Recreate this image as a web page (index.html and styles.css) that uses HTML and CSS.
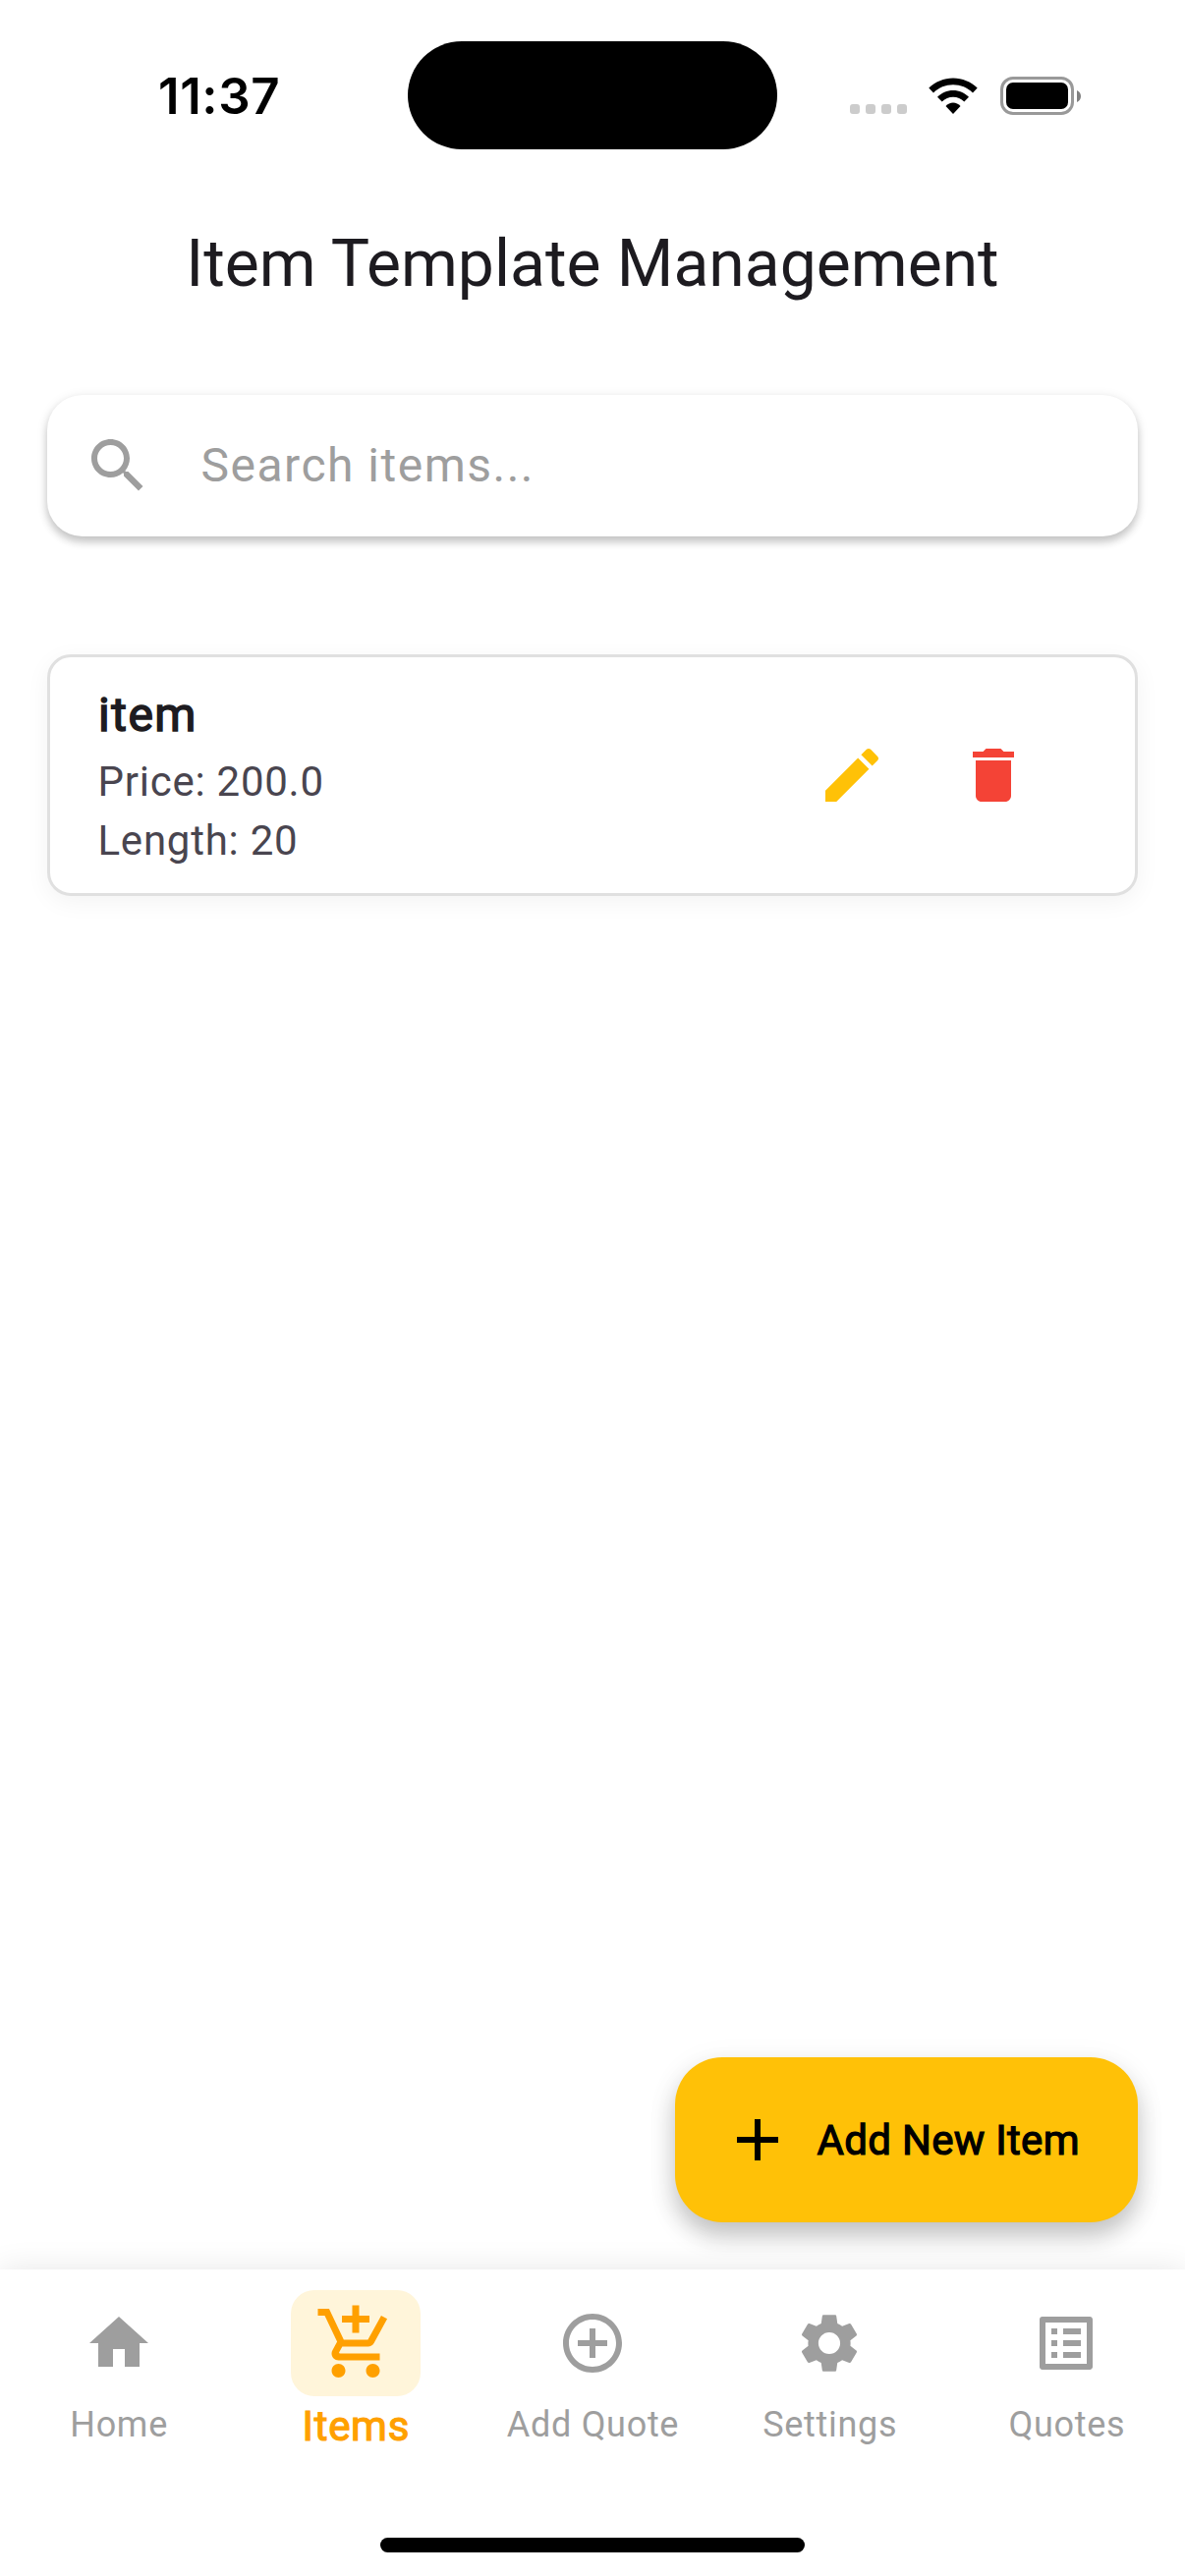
FILE: index.html
```html
<!DOCTYPE html>
<html lang="en">
<head>
<meta charset="utf-8">
<title>Item Template Management</title>
<link rel="stylesheet" href="styles.css">
</head>
<body>
<div class="screen">
  <header class="status-bar">
    <div class="status-time">11:37</div>
    <div class="island"></div>
    <div class="status-icons">
      <div class="cellular"><i></i><i></i><i></i><i></i></div>
      <svg class="wifi" viewBox="0 0 50 37">
        <path d="M0.3 10.6C7 4 15.5.4 25 .4S43 4 49.7 10.6L45 15.4C39.600 10.200 32.600 7.300 25 7.300S10.400 10.200 5 15.400Z"/>
        <path d="M9 19.700C13.300 15.500 18.800 12.900 25 12.900S36.700 15.500 41 19.700L36.300 24.500C33.200 21.500 29.300 19.700 25 19.700S16.800 21.500 13.700 24.500Z"/>
        <path d="M17.500 28.900C19.500 26.800 22.100 25.500 25 25.500S30.500 26.800 32.500 28.900L25 37Z"/>
      </svg>
      <div class="battery"><div class="battery-body"><div class="battery-level"></div></div><svg class="battery-tip" viewBox="0 0 4 12"><path d="M0 0C2.400 1 4 3.300 4 6S2.400 11 0 12Z"/></svg></div>
    </div>
  </header>

  <h1 class="app-title">Item Template Management</h1>

  <main class="content">
    <div class="search">
      <svg class="icon" viewBox="0 0 24 24"><path d="M15.500 14h-.79l-.28-.27C15.410 12.590 16 11.110 16 9.500 16 5.910 13.090 3 9.500 3S3 5.910 3 9.500 5.910 16 9.500 16c1.610 0 3.090-.59 4.230-1.570l.27.28v.79l5 4.990L20.490 19l-4.990-5zm-6 0C7.010 14 5 11.990 5 9.500S7.010 5 9.500 5 14 7.010 14 9.500 11.990 14 9.500 14z"/></svg>
      <span class="search-hint">Search items...</span>
    </div>

    <article class="item-card">
      <div class="item-text">
        <h2 class="item-name">item</h2>
        <p class="item-detail">Price: 200.0</p>
        <p class="item-detail">Length: 20</p>
      </div>
      <div class="item-actions">
        <svg class="icon edit" viewBox="0 0 24 24"><path d="M3 17.250V21h3.750L17.810 9.940l-3.750-3.750L3 17.250zM20.710 7.040c.39-.39.39-1.020 0-1.410l-2.340-2.340c-.39-.39-1.020-.39-1.410 0l-1.830 1.830 3.750 3.750 1.830-1.830z"/></svg>
        <svg class="icon delete" viewBox="0 0 24 24"><path d="M6 19c0 1.100.9 2 2 2h8c1.100 0 2-.9 2-2V7H6v12zM19 4h-3.500l-1-1h-5l-1 1H5v2h14V4z"/></svg>
      </div>
    </article>

    <div class="fab">
      <svg class="icon" viewBox="0 0 24 24"><path d="M19 13h-6v6h-2v-6H5v-2h6V5h2v6h6v2z"/></svg>
      <span class="fab-label">Add New Item</span>
    </div>
  </main>

  <nav class="nav">
    <div class="nav-items">
      <div class="nav-item">
        <div class="nav-icon"><svg class="icon" viewBox="0 0 24 24"><path d="M10 20v-6h4v6h5v-8h3L12 3 2 12h3v8z"/></svg></div>
        <span class="nav-label">Home</span>
      </div>
      <div class="nav-item active">
        <div class="nav-icon"><svg class="icon" viewBox="0 0 24 24"><path d="M11 9h2V6h3V4h-3V1h-2v3H8v2h3v3zm-4 9c-1.100 0-1.990.9-1.990 2S5.900 22 7 22s2-.9 2-2-.9-2-2-2zm10 0c-1.100 0-1.990.9-1.990 2s.89 2 1.990 2 2-.9 2-2-.9-2-2-2zm-9.830-3.250l.03-.12.9-1.630h7.450c.75 0 1.410-.41 1.750-1.030l3.860-7.010L19.420 4h-.01l-1.100 2-2.760 5H8.530l-.13-.27L6.160 6l-.95-2-.94-2H1v2h2l3.600 7.590-1.350 2.450c-.16.28-.25.61-.25.960 0 1.100.9 2 2 2h12v-2H7.420c-.13 0-.25-.11-.25-.25z"/></svg></div>
        <span class="nav-label">Items</span>
      </div>
      <div class="nav-item">
        <div class="nav-icon"><svg class="icon" viewBox="0 0 24 24"><path d="M13 7h-2v4H7v2h4v4h2v-4h4v-2h-4V7zm-1-5C6.480 2 2 6.480 2 12s4.480 10 10 10 10-4.480 10-10S17.520 2 12 2zm0 18c-4.410 0-8-3.590-8-8s3.590-8 8-8 8 3.590 8 8-3.590 8-8 8z"/></svg></div>
        <span class="nav-label">Add Quote</span>
      </div>
      <div class="nav-item">
        <div class="nav-icon"><svg class="icon" viewBox="0 0 24 24"><path d="M19.140 12.940c.04-.3.06-.61.06-.94 0-.32-.02-.64-.07-.94l2.030-1.580c.18-.14.23-.41.12-.61l-1.920-3.320c-.12-.22-.37-.29-.59-.22l-2.390.96c-.5-.38-1.030-.7-1.620-.94l-.36-2.540c-.04-.24-.24-.41-.48-.41h-3.840c-.24 0-.43.17-.47.41l-.36 2.540c-.59.24-1.130.57-1.620.94l-2.390-.96c-.22-.08-.47 0-.59.22L2.740 8.870c-.12.21-.08.47.12.61l2.030 1.580c-.05.3-.09.63-.09.94s.02.64.07.94l-2.030 1.580c-.18.14-.23.41-.12.61l1.920 3.320c.12.22.37.29.59.22l2.390-.96c.5.38 1.030.7 1.620.94l.36 2.540c.05.24.24.41.48.41h3.840c.24 0 .44-.17.47-.41l.36-2.540c.59-.24 1.130-.56 1.620-.94l2.390.96c.22.08.47 0 .59-.22l1.920-3.320c.12-.22.07-.47-.12-.61l-2.010-1.580zM12 15.700c-2.040 0-3.700-1.660-3.700-3.700s1.660-3.700 3.700-3.700 3.700 1.660 3.700 3.700-1.660 3.700-3.700 3.700z"/></svg></div>
        <span class="nav-label">Settings</span>
      </div>
      <div class="nav-item">
        <div class="nav-icon"><svg class="icon" viewBox="0 0 24 24"><path d="M19 5v14H5V5h14m1.100-2H3.900c-.5 0-.9.4-.9.900v16.200c0 .4.4.9.9.9h16.200c.4 0 .9-.5.9-.9V3.900c0-.5-.5-.9-.9-.9zM11 7h6v2h-6V7zm0 4h6v2h-6v-2zm0 4h6v2h-6v-2zM7 7h2v2H7V7zm0 4h2v2H7v-2zm0 4h2v2H7v-2z"/></svg></div>
        <span class="nav-label">Quotes</span>
      </div>
    </div>
    <div class="home-indicator"></div>
  </nav>
</div>
</body>
</html>
```
FILE: styles.css
```css
* { box-sizing: border-box; margin: 0; padding: 0; }
body { background: #fff; font-family: Roboto, sans-serif; color: #1d1b20; }

.screen { width: 1206px; height: 2622px; display: flex; flex-direction: column; overflow: hidden; background: #fff; }
.icon { display: block; width: 72px; height: 72px; fill: currentColor; flex: none; }

.status-bar { height: 186px; flex: none; display: grid; grid-template-columns: 415px 376px 415px; align-items: start; }
.status-time { padding: 68px 0 0 161px; font: 600 51px/60px Inter, sans-serif; letter-spacing: 0.6px; color: #000; }
.island { height: 110px; margin-top: 42px; border-radius: 55px; background: #000; }
.status-icons { display: flex; align-items: flex-start; padding: 78px 0 0 74px; }
.cellular { display: flex; gap: 6px; padding-top: 28px; }
.cellular i { width: 10px; height: 10px; border-radius: 3px; background: #ccc; }
.wifi { width: 50px; height: 37px; margin: 1px 0 0 22px; fill: #000; }
.battery { display: flex; align-items: center; gap: 3px; margin-left: 23px; }
.battery-body { width: 75px; height: 39px; padding: 3px; border: 3px solid #999; border-radius: 13px; }
.battery-level { height: 100%; border-radius: 7px; background: #000; }
.battery-tip { width: 4px; height: 12px; fill: #808080; }

.app-title { height: 168px; flex: none; text-align: center; font-size: 66px; line-height: 166px; font-weight: 400; }

.content { flex: 1; display: flex; flex-direction: column; padding: 48px; }
.search { height: 144px; flex: none; display: flex; align-items: center; gap: 48.5px; padding-left: 36px; border-radius: 36px; background: #fff; color: #9e9e9e; box-shadow: 0 6px 9px rgba(0,0,0,.18), 0 2px 12px rgba(0,0,0,.1); }
.search-hint { padding-bottom: 1px; font-size: 48px; line-height: 71px; letter-spacing: 1.5px; }

.item-card { height: 246px; flex: none; display: flex; justify-content: space-between; align-items: center; margin-top: 120px; padding: 0 108px 0 48.5px; border: 3px solid #e0e0e0; border-radius: 24px; background: #fff; box-shadow: 0 6px 24px rgba(0,0,0,.05); }
.item-name { padding: 0 0 2px 0.5px; font-size: 48px; line-height: 72px; font-weight: 400; letter-spacing: 1.5px; -webkit-text-stroke: 1.5px currentColor; }
.item-detail { font-size: 42px; line-height: 60px; letter-spacing: 0.75px; color: #49454f; }
.item-actions { display: flex; gap: 72px; }
.edit { color: #ffc107; }
.delete { color: #f44336; }

.fab { width: 471px; height: 168px; display: flex; align-items: center; gap: 24px; align-self: flex-end; margin-top: auto; padding-left: 48px; border-radius: 48px; background: #ffc107; color: #000; box-shadow: 0 14px 24px rgba(0,0,0,.22), 0 6px 36px rgba(0,0,0,.05); }
.fab-label { padding: 2px 0 0 0.5px; font-size: 42px; font-weight: 400; line-height: 60px; letter-spacing: 0.3px; white-space: nowrap; -webkit-text-stroke: 1.2px currentColor; }

.nav { position: relative; height: 312px; flex: none; display: flex; flex-direction: column; justify-content: space-between; padding: 21px 0 24px; background: #fff; box-shadow: 0 0 30px rgba(0,0,0,.1); }
.nav-items { display: grid; grid-template-columns: repeat(5, 1fr); }
.nav-item { display: flex; flex-direction: column; align-items: center; color: #9e9e9e; }
.nav-icon { height: 108px; display: flex; align-items: center; }
.nav-label { padding-left: 1px; font-size: 36px; line-height: 58px; letter-spacing: 0.7px; white-space: nowrap; }
.active { color: #ffa000; }
.active .nav-icon { padding: 0 24px; border-radius: 24px; background: #fff5da; }
.active .icon { width: 84px; height: 84px; }
.active .nav-label { font-size: 42px; line-height: 62px; font-weight: 400; -webkit-text-stroke: 1.2px currentColor; }

.home-indicator { width: 432px; height: 15px; margin: 0 auto; border-radius: 8px; background: #000; }
```
